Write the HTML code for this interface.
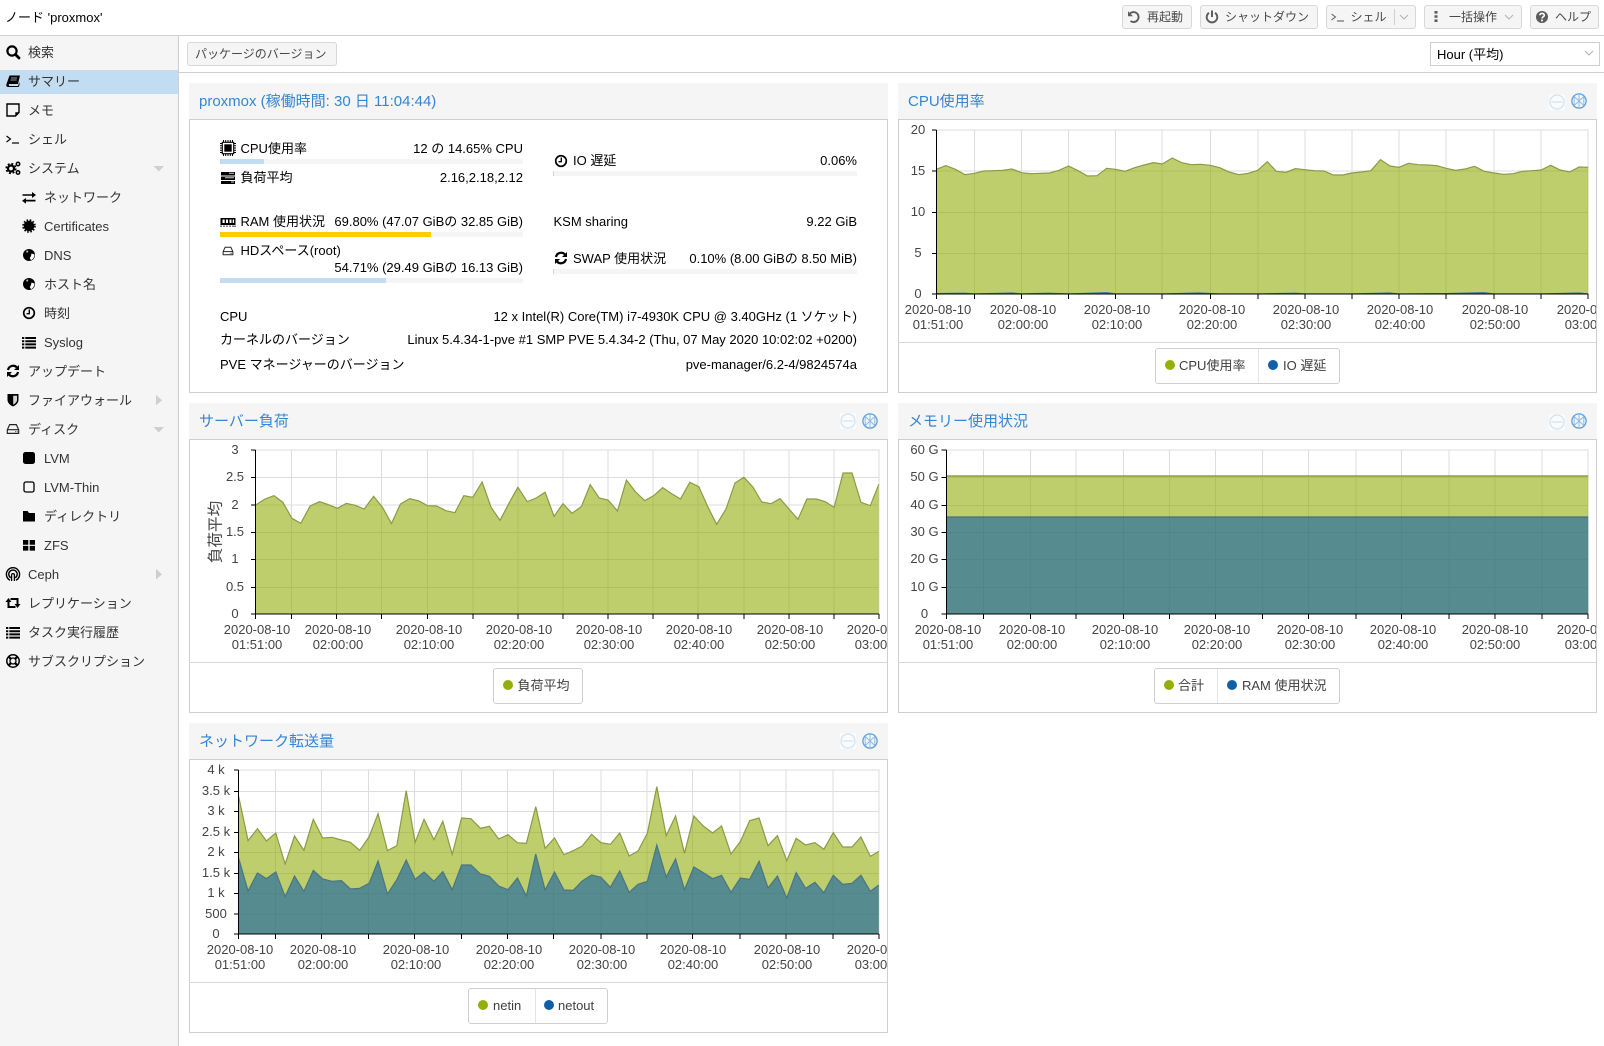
<!DOCTYPE html>
<html lang="ja"><head><meta charset="utf-8"><title>proxmox</title>
<style>
html,body{margin:0;padding:0;background:#fff}
body{position:relative;width:1604px;height:1046px;overflow:hidden;font:13px "Liberation Sans","Noto Sans CJK JP",sans-serif;color:#000}
div{box-sizing:border-box}
.a{position:absolute}
.t{position:absolute;white-space:nowrap;line-height:16px;height:16px}
.s{color:#333}
.b{position:absolute;top:5px;height:24px;background:#f5f5f5;border:1px solid #d8d8d8;border-radius:3px}
.bt{font-size:12px;color:#484848}
.ph{position:absolute;background:#f5f5f5;height:37px;width:700px;border-bottom:1px solid #cfcfcf}
.pb{position:absolute;background:#fff;border:1px solid #cfcfcf;border-top:0}
.title{position:absolute;white-space:nowrap;font-size:15px;line-height:20px;color:#3585d6}
.track{position:absolute;height:5px;background:#f5f5f5}
.fill{position:absolute;left:0;top:0;height:5px}
.lg{position:absolute;height:36px;top:0;border:1px solid #cfcfcf;border-radius:3px;background:#fff}
.dv{position:absolute;width:1px;background:#e4e4e4}
.dot{position:absolute;width:10px;height:10px;border-radius:50%}
.g{background:#94ae0a}.n{background:#115fa6}
.lt{position:absolute;white-space:nowrap;line-height:16px;color:#404040}
svg text{font-family:"Liberation Sans","Noto Sans CJK JP",sans-serif;font-size:13px;fill:#444}
.ns{vector-effect:non-scaling-stroke}
</style></head><body>

<!-- page frame -->
<div class="a" style="left:0;top:35px;width:179px;height:1011px;background:#f5f5f5;border-right:1px solid #cfcfcf"></div>
<div class="a" style="left:0;top:35px;width:1604px;height:1px;background:#cfcfcf"></div>
<div class="a" style="left:179px;top:72px;width:1425px;height:1px;background:#cfcfcf"></div>
<div class="a" style="left:0;top:70px;width:178px;height:24px;background:#c2ddf2"></div>

<div class="t" style="left:5px;top:10px">ノード 'proxmox'</div>

<!-- header buttons -->
<div class="b" style="left:1122px;width:70px"></div>
<div class="b" style="left:1200px;width:118px"></div>
<div class="b" style="left:1326px;width:90px"></div>
<div class="a" style="left:1394px;top:9px;width:1px;height:16px;background:#d0d0d0"></div>
<div class="b" style="left:1424px;width:98px"></div>
<div class="b" style="left:1530px;width:69px"></div>
<div class="t bt" style="left:1147px;top:9px">再起動</div>
<div class="t bt" style="left:1225px;top:9px">シャットダウン</div>
<div class="t bt" style="left:1350.500px;top:9px">シェル</div>
<div class="t bt" style="left:1449px;top:9px">一括操作</div>
<div class="t bt" style="left:1555px;top:9px">ヘルプ</div>

<!-- toolbar -->
<div class="b" style="left:187px;top:42px;width:150px;height:24px"></div>
<div class="t bt" style="left:195px;top:46px">パッケージのバージョン</div>
<div class="a" style="left:1430px;top:42px;width:170px;height:24px;border:1px solid #cfcfcf;background:#fff"></div>
<div class="t" style="left:1437px;top:47px">Hour (平均)</div>

<!-- sidebar text -->
<div class="t s" style="left:28px;top:45px">検索</div>
<div class="t s" style="left:28px;top:74px">サマリー</div>
<div class="t s" style="left:28px;top:103px">メモ</div>
<div class="t s" style="left:28px;top:132px">シェル</div>
<div class="t s" style="left:28px;top:161px">システム</div>
<div class="t s" style="left:44px;top:190px">ネットワーク</div>
<div class="t s" style="left:44px;top:219px">Certificates</div>
<div class="t s" style="left:44px;top:248px">DNS</div>
<div class="t s" style="left:44px;top:277px">ホスト名</div>
<div class="t s" style="left:44px;top:306px">時刻</div>
<div class="t s" style="left:44px;top:335px">Syslog</div>
<div class="t s" style="left:28px;top:364px">アップデート</div>
<div class="t s" style="left:28px;top:393px">ファイアウォール</div>
<div class="t s" style="left:28px;top:422px">ディスク</div>
<div class="t s" style="left:44px;top:451px">LVM</div>
<div class="t s" style="left:44px;top:480px">LVM-Thin</div>
<div class="t s" style="left:44px;top:509px">ディレクトリ</div>
<div class="t s" style="left:44px;top:538px">ZFS</div>
<div class="t s" style="left:28px;top:567px">Ceph</div>
<div class="t s" style="left:28px;top:596px">レプリケーション</div>
<div class="t s" style="left:28px;top:625px">タスク実行履歴</div>
<div class="t s" style="left:28px;top:654px">サブスクリプション</div>

<!-- panels -->
<div class="ph" style="left:189px;top:83px;width:699px"></div>
<div class="pb" style="left:189px;top:120px;width:699px;height:273px"></div>
<div class="title" style="left:199px;top:92px">proxmox (稼働時間: 30 日 11:04:44)</div>

<div class="ph" style="left:898px;top:83px;width:699px"></div>
<div class="pb" style="left:898px;top:120px;width:699px;height:273px"></div>
<div class="a" style="left:899px;top:342px;width:697px;height:1px;background:#d8d8d8"></div>
<div class="title" style="left:908px;top:92px">CPU使用率</div>

<div class="ph" style="left:189px;top:403px;width:699px"></div>
<div class="pb" style="left:189px;top:440px;width:699px;height:273px"></div>
<div class="a" style="left:190px;top:662px;width:697px;height:1px;background:#d8d8d8"></div>
<div class="title" style="left:199px;top:412px">サーバー負荷</div>

<div class="ph" style="left:898px;top:403px;width:699px"></div>
<div class="pb" style="left:898px;top:440px;width:699px;height:273px"></div>
<div class="a" style="left:899px;top:662px;width:697px;height:1px;background:#d8d8d8"></div>
<div class="title" style="left:908px;top:412px">メモリー使用状況</div>

<div class="ph" style="left:189px;top:723px;width:699px"></div>
<div class="pb" style="left:189px;top:760px;width:699px;height:273px"></div>
<div class="a" style="left:190px;top:982px;width:697px;height:1px;background:#d8d8d8"></div>
<div class="title" style="left:199px;top:732px">ネットワーク転送量</div>

<!-- status panel -->
<div class="t" style="left:240.500px;top:141px">CPU使用率</div>
<div class="t" style="right:1081px;top:141px">12 の 14.65% CPU</div>
<div class="track" style="left:220px;top:159px;width:303px"><div class="fill" style="width:44px;background:#c2ddf2"></div></div>
<div class="t" style="left:240.500px;top:170px">負荷平均</div>
<div class="t" style="right:1081px;top:170px">2.16,2.18,2.12</div>
<div class="t" style="left:240.500px;top:214px">RAM 使用状況</div>
<div class="t" style="right:1081px;top:214px">69.80% (47.07 GiBの 32.85 GiB)</div>
<div class="track" style="left:220px;top:232px;width:303px"><div class="fill" style="width:211px;background:#ffcc00"></div></div>
<div class="t" style="left:240.500px;top:243px">HDスペース(root)</div>
<div class="t" style="right:1081px;top:260px">54.71% (29.49 GiBの 16.13 GiB)</div>
<div class="track" style="left:220px;top:278px;width:303px"><div class="fill" style="width:166px;background:#c2ddf2"></div></div>

<div class="t" style="left:573px;top:153px">IO 遅延</div>
<div class="t" style="right:747px;top:153px">0.06%</div>
<div class="track" style="left:553px;top:171px;width:304px"><div class="fill" style="width:1px;background:#c2ddf2"></div></div>
<div class="t" style="left:553.500px;top:214px">KSM sharing</div>
<div class="t" style="right:747px;top:214px">9.22 GiB</div>
<div class="t" style="left:573px;top:251px">SWAP 使用状況</div>
<div class="t" style="right:747px;top:251px">0.10% (8.00 GiBの 8.50 MiB)</div>
<div class="track" style="left:553px;top:269px;width:304px"><div class="fill" style="width:1px;background:#c2ddf2"></div></div>

<div class="t" style="left:220px;top:309px">CPU</div>
<div class="t" style="right:747px;top:309px">12 x Intel(R) Core(TM) i7-4930K CPU @ 3.40GHz (1 ソケット)</div>
<div class="t" style="left:220px;top:332px">カーネルのバージョン</div>
<div class="t" style="right:747px;top:332px">Linux 5.4.34-1-pve #1 SMP PVE 5.4.34-2 (Thu, 07 May 2020 10:02:02 +0200)</div>
<div class="t" style="left:220px;top:357px">PVE マネージャーのバージョン</div>
<div class="t" style="right:747px;top:357px">pve-manager/6.2-4/9824574a</div>

<!-- legends -->
<div class="lg" style="left:1155px;top:348px;width:185px"></div>
<div class="dv" style="left:1258px;top:349px;height:34px"></div>
<div class="dot g" style="left:1165px;top:360px"></div><div class="lt" style="left:1179px;top:358px">CPU使用率</div>
<div class="dot n" style="left:1268px;top:360px"></div><div class="lt" style="left:1283px;top:358px">IO 遅延</div>

<div class="lg" style="left:493px;top:668px;width:90px"></div>
<div class="dot g" style="left:503px;top:680px"></div><div class="lt" style="left:517.500px;top:678px">負荷平均</div>

<div class="lg" style="left:1154px;top:668px;width:186px"></div>
<div class="dv" style="left:1217px;top:669px;height:34px"></div>
<div class="dot g" style="left:1164px;top:680px"></div><div class="lt" style="left:1178px;top:678px">合計</div>
<div class="dot n" style="left:1227px;top:680px"></div><div class="lt" style="left:1242px;top:678px">RAM 使用状況</div>

<div class="lg" style="left:468px;top:988px;width:140px"></div>
<div class="dv" style="left:535px;top:989px;height:34px"></div>
<div class="dot g" style="left:478px;top:1000px"></div><div class="lt" style="left:493px;top:998px">netin</div>
<div class="dot n" style="left:544px;top:1000px"></div><div class="lt" style="left:558px;top:998px">netout</div>

<svg class="a" style="left:0;top:0" width="1604" height="1046" viewBox="0 0 1604 1046">
<defs>
<clipPath id="cl"><rect x="189" y="0" width="698" height="1046"/></clipPath>
<clipPath id="cr"><rect x="898" y="0" width="698" height="1046"/></clipPath>

<symbol id="search" viewBox="0 0 16 16"><circle cx="7" cy="7" r="4.6" fill="none" stroke="#000" stroke-width="2.2"/><path d="M10.4 10.4L14 14" stroke="#000" stroke-width="2.8" stroke-linecap="round"/></symbol>
<symbol id="book" viewBox="0 0 16 16"><path d="M4.500 2.500H15L13 11H4.500C3.500 11 3.500 13 4.500 13H13L14.500 9V12L13.500 14H3C1.300 14 1 12.500 1.500 11Z" fill="#000"/><path d="M6 5h6M5.500 7h6" stroke="#bcd6ea" stroke-width=".8"/></symbol>
<symbol id="note" viewBox="0 0 16 16"><path d="M2 2H14V10.500L10.500 14H2Z" fill="none" stroke="#000" stroke-width="1.4"/><path d="M13.800 10.300H10.300V13.800Z" fill="#000"/></symbol>
<symbol id="term" viewBox="0 0 16 16"><path d="M1.500 5l4 3-4 3" fill="none" stroke="#000" stroke-width="1.1"/><path d="M7 12H14" stroke="#000" stroke-width="1.2"/></symbol>
<symbol id="term2" viewBox="0 0 16 16"><path d="M1.500 5l4 3-4 3" fill="none" stroke="#5d5d5d" stroke-width="1"/><path d="M7 12H14" stroke="#5d5d5d" stroke-width="1.1"/></symbol>
<symbol id="cogs" viewBox="0 0 16 16"><circle cx="6" cy="8.500" r="3" fill="none" stroke="#000" stroke-width="2.2"/><circle cx="6" cy="8.500" r="4.800" fill="none" stroke="#000" stroke-width="1.600" stroke-dasharray="2 1.800"/><circle cx="13" cy="4" r="1.700" fill="none" stroke="#000" stroke-width="1.500"/><circle cx="13" cy="12.500" r="1.700" fill="none" stroke="#000" stroke-width="1.500"/></symbol>
<symbol id="exch" viewBox="0 0 16 16"><path d="M1.500 5.200H11V3L15 6l-4 3V6.800H1.500Z" fill="#000"/><path d="M14.500 10.800H5V9L1 11.700l4 3V12.500H14.500Z" fill="#000"/></symbol>
<symbol id="cert" viewBox="0 0 16 16"><circle cx="8" cy="8" r="5.300" fill="#000"/><circle cx="8" cy="8" r="6" fill="none" stroke="#000" stroke-width="1.600" stroke-dasharray="1.600 1.600"/></symbol>
<symbol id="globe" viewBox="0 0 16 16"><circle cx="8" cy="8" r="6" fill="#000"/><path d="M10.500 6.500L13.500 7.500C13.500 10 12 12.300 10 13.200L8.800 11 10 9Z" fill="#fff"/><path d="M5.300 3.800L7.300 3.500 7 5.500 5.300 5.500Z" fill="#bbb"/></symbol>
<symbol id="clock" viewBox="0 0 16 16"><circle cx="8" cy="8" r="5.300" fill="none" stroke="#000" stroke-width="1.700"/><path d="M8.300 4.500V8.700H5.500" fill="none" stroke="#000" stroke-width="1.400"/></symbol>
<symbol id="list" viewBox="0 0 16 16"><path d="M1 3h2.300v2H1zM4.300 3H15v2H4.300zM1 6.200h2.300v2H1zM4.300 6.200H15v2H4.300zM1 9.400h2.300v2H1zM4.300 9.400H15v2H4.300zM1 12.600h2.300v2H1zM4.300 12.600H15v2H4.300z" fill="#000"/></symbol>
<symbol id="refresh" viewBox="0 0 16 16"><path d="M3 7A5.200 5.200 0 0 1 12 4.500M13 9A5.200 5.200 0 0 1 4 11.500" fill="none" stroke="#000" stroke-width="2.2"/><path d="M14 2V7H9ZM2 14V9H7Z" fill="#000"/></symbol>
<symbol id="shield" viewBox="0 0 16 16"><path d="M2.500 2H13.500V8C13.500 11 10.500 13.500 8 14.500 5.500 13.500 2.500 11 2.500 8Z" fill="#000"/><path d="M8.200 3.700H12V8C12 10 10 11.800 8.200 12.700Z" fill="#d4d4d4"/></symbol>
<symbol id="hdd" viewBox="0 0 16 16"><path d="M4.200 3H11.800L14.500 8.800V13H1.500V8.800Z" fill="none" stroke="#222" stroke-width="1.300"/><path d="M1.500 8.800H14.500" stroke="#222" stroke-width="1.300"/><path d="M10.500 11h1M12.300 11h1" stroke="#222"/></symbol>
<symbol id="sq" viewBox="0 0 16 16"><rect x="2" y="2" width="12" height="12" rx="2.500" fill="#000"/></symbol>
<symbol id="sqo" viewBox="0 0 16 16"><rect x="3" y="3" width="10" height="10" rx="1.800" fill="none" stroke="#000" stroke-width="1.300"/></symbol>
<symbol id="folder" viewBox="0 0 16 16"><path d="M2 3H6.500L8 5H14V13.500H2Z" fill="#000"/></symbol>
<symbol id="th" viewBox="0 0 16 16"><path d="M2 3h5.300v4.700H2zM8.700 3H14v4.700H8.700zM2 8.900h5.300v4.700H2zM8.700 8.900H14v4.700H8.700z" fill="#000"/></symbol>
<symbol id="ceph" viewBox="0 0 16 16"><path d="M5 14.200A6.600 6.600 0 1 1 11 14.200" fill="none" stroke="#000" stroke-width="1.400"/><path d="M5.800 11.800A4.200 4.200 0 1 1 10.200 11.800" fill="none" stroke="#000" stroke-width="1.400"/><path d="M6.600 15V9A1.400 1.400 0 0 1 9.400 9V15" fill="none" stroke="#000" stroke-width="1.300"/></symbol>
<symbol id="retw" viewBox="0 0 16 16"><path d="M3.500 6V12H10.500M12.500 10V4H5.500" fill="none" stroke="#000" stroke-width="2"/><path d="M0.500 7L3.500 3 6.500 7ZM9.500 9L12.500 13 15.500 9Z" fill="#000"/></symbol>
<symbol id="support" viewBox="0 0 16 16"><circle cx="8" cy="8" r="6.200" fill="none" stroke="#000" stroke-width="1.500"/><circle cx="8" cy="8" r="3" fill="none" stroke="#000" stroke-width="1.300"/><path d="M3.800 3.800L6 6M12.200 3.800L10 6M3.800 12.200L6 10M12.200 12.200L10 10" stroke="#000" stroke-width="2.200"/></symbol>
<symbol id="chip" viewBox="0 0 16 16"><rect x="2.300" y="2.300" width="11.400" height="11.400" fill="none" stroke="#000" stroke-width="1.100"/><rect x="4.300" y="4.300" width="7.400" height="7.400" fill="#000"/><path d="M3.500 0v2M5.700 0v2M8 0v2M10.300 0v2M12.500 0v2M3.500 14v2M5.700 14v2M8 14v2M10.300 14v2M12.500 14v2M0 3.500h2M0 5.700h2M0 8h2M0 10.300h2M0 12.500h2M14 3.500h2M14 5.700h2M14 8h2M14 10.300h2M14 12.500h2" stroke="#000" stroke-width="1"/></symbol>
<symbol id="tasks" viewBox="0 0 16 16"><path d="M1 2h14v3.500H1zM1 6.500h14V10H1zM1 11h14v3H1z" fill="#000"/><path d="M9 3.200h5M5 7.700h9M11 12h3" stroke="#ccc"/></symbol>
<symbol id="ram" viewBox="0 0 16 16"><rect x="0.500" y="4" width="15" height="7" fill="#000"/><path d="M2.500 5.500h2.200v3.500H2.500zM6 5.500h2v3.500H6zM9.500 5.500h2v3.500h-2zM12.700 5.500h1.300v3.500h-1.300z" fill="#fff"/><path d="M1 11.500v1.500M4 11.500v1.500M7 11.500v1.500M10 11.500v1.500M13 11.500v1.500M15 11.500v1.500" stroke="#000"/></symbol>
<symbol id="undo" viewBox="0 0 16 16"><path d="M4 4.500A5 5 0 1 1 4.500 12" fill="none" stroke="#5d5d5d" stroke-width="1.900"/><path d="M2 2.200V7.200H7Z" fill="#5d5d5d"/></symbol>
<symbol id="power" viewBox="0 0 16 16"><path d="M5 3.800A5.300 5.300 0 1 0 11 3.800" fill="none" stroke="#5d5d5d" stroke-width="1.900"/><path d="M8 1.500V8" stroke="#5d5d5d" stroke-width="2"/></symbol>
<symbol id="help" viewBox="0 0 16 16"><circle cx="8" cy="8" r="6" fill="#5d5d5d"/><path d="M5.800 6.300C5.800 3.700 10.300 3.900 10.300 6.300 10.300 7.900 8 7.800 8 9.500" fill="none" stroke="#fff" stroke-width="1.600"/><path d="M7.100 10.500h1.800v1.800H7.100z" fill="#fff"/></symbol>
<symbol id="minus" viewBox="0 0 16 16"><rect width="16" height="16" fill="#f9fbfd"/><circle cx="8" cy="8" r="7" fill="none" stroke="#cfe3f3" stroke-width="1.200"/><path d="M2.500 8H13.500" stroke="#cfe3f3" stroke-width="1.200"/></symbol>
<symbol id="plus" viewBox="0 0 16 16"><circle cx="8" cy="8" r="7.100" fill="#f2f7fc" stroke="#5f9fd6" stroke-width="1.300"/><path d="M8 1V15M3.200 3.500L12.800 12.500M12.800 3.500L3.200 12.500M3.200 3.500V12.500M12.800 3.500V12.500" fill="none" stroke="#8dbbe2" stroke-width="1"/></symbol>
<symbol id="chev" viewBox="0 0 10 6"><path d="M1 1L5 5 9 1" fill="none" stroke="#b4b4b4" stroke-width="1.100"/></symbol>
</defs>

<!-- header icons -->
<use href="#undo" x="1126" y="9" width="16" height="16"/>
<use href="#power" x="1204" y="9" width="16" height="16"/>
<use href="#term2" x="1330" y="9" width="16" height="16"/>
<use href="#chev" x="1399" y="14" width="10" height="6"/>
<path d="M1434.500 11h3v2.600h-3zM1434.500 15.200h3v2.600h-3zM1434.500 19.400h3v2.600h-3z" fill="#5d5d5d"/>
<use href="#chev" x="1504" y="14" width="10" height="6"/>
<use href="#help" x="1534" y="9" width="16" height="16"/>
<use href="#chev" x="1584" y="50" width="10" height="6"/>

<!-- sidebar icons -->
<use href="#search" x="5" y="44" width="16" height="16"/>
<use href="#book" x="5" y="73" width="16" height="16"/>
<use href="#note" x="5" y="102" width="16" height="16"/>
<use href="#term" x="5" y="131" width="16" height="16"/>
<use href="#cogs" x="5" y="160" width="16" height="16"/>
<use href="#exch" x="21" y="189" width="16" height="16"/>
<use href="#cert" x="21" y="218" width="16" height="16"/>
<use href="#globe" x="21" y="247" width="16" height="16"/>
<use href="#globe" x="21" y="276" width="16" height="16"/>
<use href="#clock" x="21" y="305" width="16" height="16"/>
<use href="#list" x="21" y="334" width="16" height="16"/>
<use href="#refresh" x="5" y="363" width="16" height="16"/>
<use href="#shield" x="5" y="392" width="16" height="16"/>
<use href="#hdd" x="6" y="422" width="14" height="14"/>
<use href="#sq" x="21" y="450" width="16" height="16"/>
<use href="#sqo" x="21" y="479" width="16" height="16"/>
<use href="#folder" x="21" y="508" width="16" height="16"/>
<use href="#th" x="21" y="537" width="16" height="16"/>
<use href="#ceph" x="5" y="566" width="16" height="16"/>
<use href="#retw" x="5" y="595" width="16" height="16"/>
<use href="#list" x="5" y="624" width="16" height="16"/>
<use href="#support" x="5" y="653" width="16" height="16"/>
<path d="M153.500 166H164L158.800 171.500Z" fill="#cfcfcf"/>
<path d="M153.500 427H164L158.800 432.500Z" fill="#cfcfcf"/>
<path d="M156 395V405.500L162 400.200Z" fill="#cfcfcf"/>
<path d="M156 569V579.500L162 574.200Z" fill="#cfcfcf"/>

<!-- status icons -->
<use href="#chip" x="220" y="140" width="16" height="16"/>
<use href="#tasks" x="220" y="170" width="16" height="16"/>
<use href="#ram" x="220" y="214" width="16" height="16"/>
<use href="#hdd" x="222" y="245" width="12" height="12"/>
<use href="#clock" x="553" y="153" width="16" height="16"/>
<use href="#refresh" x="553" y="250" width="16" height="16"/>

<!-- panel tools -->
<use href="#minus" x="1549" y="94" width="16" height="16"/>
<use href="#plus" x="1571" y="93" width="16" height="16"/>
<use href="#minus" x="1549" y="414" width="16" height="16"/>
<use href="#plus" x="1571" y="413" width="16" height="16"/>
<use href="#minus" x="840" y="413" width="16" height="16"/>
<use href="#plus" x="862" y="413" width="16" height="16"/>
<use href="#minus" x="840" y="733" width="16" height="16"/>
<use href="#plus" x="862" y="733" width="16" height="16"/>

<!-- CPU chart -->
<g transform="translate(894.7,80) scale(.4527,.33333)">
<path class="ns" d="M92 150H1532V642M92 273H1532M92 397H1532M92 520H1532M176 150V642M280 150V642M384 150V642M488 150V642M591 150V642M698 150V642M802 150V642M906 150V642M1010 150V642M1114 150V642M1218 150V642M1324 150V642M1428 150V642" fill="none" stroke="#ddd" shape-rendering="crispEdges"/>
<polygon points="92,642 92,268 113,257 134,268 155,284 176,280 197,273 218,272 238,271 259,267 280,278 301,281 322,280 342,279 363,271 384,258 405,272 426,288 447,287 468,265 488,268 509,274 530,263 551,255 572,248 591,252 613,234 634,248 655,254 676,253 697,256 718,263 739,276 760,284 781,280 802,271 823,245 843,274 864,277 885,266 906,269 927,272 948,273 969,285 990,285 1010,279 1031,276 1052,272 1073,239 1094,258 1114,262 1135,250 1156,254 1177,255 1198,257 1218,265 1239,271 1260,267 1281,259 1302,274 1324,279 1345,283 1366,281 1387,274 1408,272 1428,270 1449,256 1470,270 1491,276 1512,261 1532,262 1532,642" fill="#94ae0a" fill-opacity=".6"/>
<polyline class="ns" points="92,268 113,257 134,268 155,284 176,280 197,273 218,272 238,271 259,267 280,278 301,281 322,280 342,279 363,271 384,258 405,272 426,288 447,287 468,265 488,268 509,274 530,263 551,255 572,248 591,252 613,234 634,248 655,254 676,253 697,256 718,263 739,276 760,284 781,280 802,271 823,245 843,274 864,277 885,266 906,269 927,272 948,273 969,285 990,285 1010,279 1031,276 1052,272 1073,239 1094,258 1114,262 1135,250 1156,254 1177,255 1198,257 1218,265 1239,271 1260,267 1281,259 1302,274 1324,279 1345,283 1366,281 1387,274 1408,272 1428,270 1449,256 1470,270 1491,276 1512,261 1532,262" fill="none" stroke="#8a9b45" stroke-width="1.2"/>
<polygon points="92,642 92,639 155,638 176,640 260,637 280,640 340,638 384,640 468,636 488,640 591,640 672,637 718,640 802,640 885,638 906,640 1010,640 1094,637 1114,640 1218,639 1302,636 1324,640 1428,640 1512,637 1532,640 1532,642" fill="#115fa6" fill-opacity=".75"/>
<path class="ns" d="M82 150H92M82 273H92M82 397H92M82 520H92M82 642H92V150M92 642H1532M92 642V657M176 642V657M280 642V657M384 642V657M488 642V657M591 642V657M698 642V657M802 642V657M906 642V657M1010 642V657M1114 642V657M1218 642V657M1324 642V657M1428 642V657M1532 642V657" fill="none" stroke="#000" shape-rendering="crispEdges"/>
</g>
<g clip-path="url(#cr)" text-anchor="middle">
<text x="918" y="134">20</text><text x="918" y="175">15</text><text x="918" y="216">10</text><text x="918" y="257">5</text><text x="918" y="298">0</text>
<text x="938" y="314">2020-08-10</text><text x="938" y="329">01:51:00</text>
<text x="1023" y="314">2020-08-10</text><text x="1023" y="329">02:00:00</text>
<text x="1117" y="314">2020-08-10</text><text x="1117" y="329">02:10:00</text>
<text x="1212" y="314">2020-08-10</text><text x="1212" y="329">02:20:00</text>
<text x="1306" y="314">2020-08-10</text><text x="1306" y="329">02:30:00</text>
<text x="1400" y="314">2020-08-10</text><text x="1400" y="329">02:40:00</text>
<text x="1495" y="314">2020-08-10</text><text x="1495" y="329">02:50:00</text>
<text x="1590" y="314">2020-08-10</text><text x="1590" y="329">03:00:00</text>
</g>

<!-- Load chart -->
<g transform="translate(190,400) scale(.4467,.33333)">
<path class="ns" d="M147 150H1542V642M147 232H1542M147 315H1542M147 397H1542M147 479H1542M147 562H1542M227 150V642M328 150V642M429 150V642M532 150V642M633 150V642M734 150V642M835 150V642M936 150V642M1036 150V642M1137 150V642M1240 150V642M1341 150V642M1442 150V642" fill="none" stroke="#ddd" shape-rendering="crispEdges"/>
<polygon points="147,642 147,315 168,297 188,287 208,307 228,355 248,370 269,318 290,305 310,314 330,325 350,310 370,316 390,327 411,289 431,322 451,371 471,312 492,296 512,303 532,317 552,318 573,332 593,338 613,287 633,292 654,246 674,322 694,361 714,310 734,262 755,305 775,294 795,277 815,349 835,311 855,340 876,320 896,254 916,294 936,300 957,333 977,240 997,275 1018,302 1038,287 1058,263 1078,281 1098,297 1119,247 1139,260 1159,320 1179,373 1200,327 1220,249 1240,232 1260,261 1280,306 1301,311 1321,296 1341,327 1361,358 1381,297 1402,297 1422,305 1442,322 1462,219 1482,219 1502,307 1523,317 1542,253 1542,642" fill="#94ae0a" fill-opacity=".6"/>
<polyline class="ns" points="147,315 168,297 188,287 208,307 228,355 248,370 269,318 290,305 310,314 330,325 350,310 370,316 390,327 411,289 431,322 451,371 471,312 492,296 512,303 532,317 552,318 573,332 593,338 613,287 633,292 654,246 674,322 694,361 714,310 734,262 755,305 775,294 795,277 815,349 835,311 855,340 876,320 896,254 916,294 936,300 957,333 977,240 997,275 1018,302 1038,287 1058,263 1078,281 1098,297 1119,247 1139,260 1159,320 1179,373 1200,327 1220,249 1240,232 1260,261 1280,306 1301,311 1321,296 1341,327 1361,358 1381,297 1402,297 1422,305 1442,322 1462,219 1482,219 1502,307 1523,317 1542,253" fill="none" stroke="#8a9b45" stroke-width="1.2"/>
<path class="ns" d="M136 150H147M136 232H147M136 315H147M136 397H147M136 479H147M136 562H147M136 642H147V150M147 642H1542M147 642V657M227 642V657M328 642V657M429 642V657M532 642V657M633 642V657M734 642V657M835 642V657M936 642V657M1036 642V657M1137 642V657M1240 642V657M1341 642V657M1442 642V657M1542 642V657" fill="none" stroke="#000" shape-rendering="crispEdges"/>
</g>
<g clip-path="url(#cl)" text-anchor="middle">
<text x="235" y="454">3</text><text x="235" y="481">2.5</text><text x="235" y="509">2</text><text x="235" y="536">1.5</text><text x="235" y="563">1</text><text x="235" y="591">0.5</text><text x="235" y="618">0</text>
<text transform="translate(220.500,532) rotate(-90)" style="font-size:15.600px">負荷平均</text>
<text x="257" y="634">2020-08-10</text><text x="257" y="649">01:51:00</text>
<text x="338" y="634">2020-08-10</text><text x="338" y="649">02:00:00</text>
<text x="429" y="634">2020-08-10</text><text x="429" y="649">02:10:00</text>
<text x="519" y="634">2020-08-10</text><text x="519" y="649">02:20:00</text>
<text x="609" y="634">2020-08-10</text><text x="609" y="649">02:30:00</text>
<text x="699" y="634">2020-08-10</text><text x="699" y="649">02:40:00</text>
<text x="790" y="634">2020-08-10</text><text x="790" y="649">02:50:00</text>
<text x="880" y="634">2020-08-10</text><text x="880" y="649">03:00:00</text>
</g>

<!-- Memory chart -->
<g transform="translate(894.7,400) scale(.4527,.33333)">
<path class="ns" d="M114 150H1532V642M114 232H1532M114 316H1532M114 397H1532M114 479H1532M114 562H1532M196 150V642M300 150V642M401 150V642M505 150V642M607 150V642M709 150V642M813 150V642M914 150V642M1019 150V642M1120 150V642M1224 150V642M1326 150V642M1430 150V642" fill="none" stroke="#ddd" shape-rendering="crispEdges"/>
<polygon points="114,642 114,228 1532,228 1532,642" fill="#94ae0a" fill-opacity=".6"/>
<polygon points="114,642 114,351 1532,351 1532,642" fill="#115fa6" fill-opacity=".6"/>
<path class="ns" d="M114 228H1532" stroke="#8f9f45" stroke-width="1.400" fill="none"/>
<path class="ns" d="M114 351H1532" stroke="#47717a" stroke-width="1.200" fill="none"/>
<path class="ns" d="M103 150H114M103 232H114M103 316H114M103 397H114M103 479H114M103 562H114M103 642H114V150M114 642H1532M114 642V657M196 642V657M300 642V657M401 642V657M505 642V657M607 642V657M709 642V657M813 642V657M914 642V657M1019 642V657M1120 642V657M1224 642V657M1326 642V657M1430 642V657M1532 642V657" fill="none" stroke="#000" shape-rendering="crispEdges"/>
</g>
<g clip-path="url(#cr)" text-anchor="middle">
<text x="924.500" y="454">60 G</text><text x="924.500" y="481">50 G</text><text x="924.500" y="509">40 G</text><text x="924.500" y="536">30 G</text><text x="924.500" y="563">20 G</text><text x="924.500" y="591">10 G</text><text x="924.500" y="618">0</text>
<text x="948" y="634">2020-08-10</text><text x="948" y="649">01:51:00</text>
<text x="1032" y="634">2020-08-10</text><text x="1032" y="649">02:00:00</text>
<text x="1125" y="634">2020-08-10</text><text x="1125" y="649">02:10:00</text>
<text x="1217" y="634">2020-08-10</text><text x="1217" y="649">02:20:00</text>
<text x="1310" y="634">2020-08-10</text><text x="1310" y="649">02:30:00</text>
<text x="1403" y="634">2020-08-10</text><text x="1403" y="649">02:40:00</text>
<text x="1495" y="634">2020-08-10</text><text x="1495" y="649">02:50:00</text>
<text x="1590" y="634">2020-08-10</text><text x="1590" y="649">03:00:00</text>
</g>

<!-- Network chart -->
<g transform="translate(190,720) scale(.4467,.33333)">
<path class="ns" d="M109 150H1542V642M109 215H1542M109 274H1542M109 337H1542M109 397H1542M109 460H1542M109 520H1542M109 582H1542M191 150V642M294 150V642M400 150V642M503 150V642M608 150V642M711 150V642M814 150V642M920 150V642M1023 150V642M1125 150V642M1231 150V642M1334 150V642M1439 150V642" fill="none" stroke="#ddd" shape-rendering="crispEdges"/>
<polygon points="109,642 109,230 130,362 151,326 171,363 192,339 213,432 234,348 255,391 276,298 297,354 318,352 339,360 359,367 380,391 401,350 421,281 442,392 463,377 484,212 504,367 524,298 546,359 566,304 587,403 608,294 629,296 650,325 670,319 691,357 712,344 733,368 753,370 774,260 795,385 816,354 837,404 858,392 878,378 899,343 920,368 941,373 962,339 983,408 1003,393 1024,339 1045,200 1066,347 1087,288 1107,400 1128,288 1149,318 1170,339 1190,318 1211,402 1232,365 1253,302 1274,294 1294,377 1315,347 1336,422 1357,355 1378,375 1399,368 1419,388 1440,338 1461,381 1482,381 1502,351 1523,409 1542,394 1542,642" fill="#94ae0a" fill-opacity=".6"/>
<polyline class="ns" points="109,230 130,362 151,326 171,363 192,339 213,432 234,348 255,391 276,298 297,354 318,352 339,360 359,367 380,391 401,350 421,281 442,392 463,377 484,212 504,367 524,298 546,359 566,304 587,403 608,294 629,296 650,325 670,319 691,357 712,344 733,368 753,370 774,260 795,385 816,354 837,404 858,392 878,378 899,343 920,368 941,373 962,339 983,408 1003,393 1024,339 1045,200 1066,347 1087,288 1107,400 1128,288 1149,318 1170,339 1190,318 1211,402 1232,365 1253,302 1274,294 1294,377 1315,347 1336,422 1357,355 1378,375 1399,368 1419,388 1440,338 1461,381 1482,381 1502,351 1523,409 1542,394" fill="none" stroke="#8a9b45" stroke-width="1.2"/>
<polygon points="109,642 109,415 130,513 151,459 171,476 192,456 213,530 234,468 255,514 276,451 297,477 318,484 339,482 359,507 380,505 401,490 421,423 442,522 463,479 484,420 504,478 524,456 546,484 566,455 587,509 608,435 629,435 650,462 670,469 691,498 712,509 733,474 753,528 774,402 795,510 816,456 837,510 858,511 878,483 899,465 920,472 941,502 962,453 983,517 1003,493 1024,484 1045,375 1066,471 1087,417 1107,509 1128,441 1149,458 1170,476 1190,466 1211,517 1232,474 1253,478 1274,424 1294,504 1315,468 1336,534 1357,458 1378,505 1399,487 1419,518 1440,466 1461,493 1482,490 1502,466 1523,514 1542,495 1542,642" fill="#115fa6" fill-opacity=".6"/>
<polyline class="ns" points="109,415 130,513 151,459 171,476 192,456 213,530 234,468 255,514 276,451 297,477 318,484 339,482 359,507 380,505 401,490 421,423 442,522 463,479 484,420 504,478 524,456 546,484 566,455 587,509 608,435 629,435 650,462 670,469 691,498 712,509 733,474 753,528 774,402 795,510 816,456 837,510 858,511 878,483 899,465 920,472 941,502 962,453 983,517 1003,493 1024,484 1045,375 1066,471 1087,417 1107,509 1128,441 1149,458 1170,476 1190,466 1211,517 1232,474 1253,478 1274,424 1294,504 1315,468 1336,534 1357,458 1378,505 1399,487 1419,518 1440,466 1461,493 1482,490 1502,466 1523,514 1542,495" fill="none" stroke="#4a7582" stroke-width="1.2"/>
<path class="ns" d="M98 150H109M98 215H109M98 274H109M98 337H109M98 397H109M98 460H109M98 520H109M98 582H109M98 642H109V150M109 642H1542M109 642V657M191 642V657M294 642V657M400 642V657M503 642V657M608 642V657M711 642V657M814 642V657M920 642V657M1023 642V657M1125 642V657M1231 642V657M1334 642V657M1439 642V657M1542 642V657" fill="none" stroke="#000" shape-rendering="crispEdges"/>
</g>
<g clip-path="url(#cl)" text-anchor="middle">
<text x="216" y="774">4 k</text><text x="216" y="795">3.5 k</text><text x="216" y="815">3 k</text><text x="216" y="836">2.5 k</text><text x="216" y="856">2 k</text><text x="216" y="877">1.5 k</text><text x="216" y="897">1 k</text><text x="216" y="918">500</text><text x="216" y="938">0</text>
<text x="240" y="954">2020-08-10</text><text x="240" y="969">01:51:00</text>
<text x="323" y="954">2020-08-10</text><text x="323" y="969">02:00:00</text>
<text x="416" y="954">2020-08-10</text><text x="416" y="969">02:10:00</text>
<text x="509" y="954">2020-08-10</text><text x="509" y="969">02:20:00</text>
<text x="602" y="954">2020-08-10</text><text x="602" y="969">02:30:00</text>
<text x="693" y="954">2020-08-10</text><text x="693" y="969">02:40:00</text>
<text x="787" y="954">2020-08-10</text><text x="787" y="969">02:50:00</text>
<text x="880" y="954">2020-08-10</text><text x="880" y="969">03:00:00</text>
</g>
</svg>
</body></html>
